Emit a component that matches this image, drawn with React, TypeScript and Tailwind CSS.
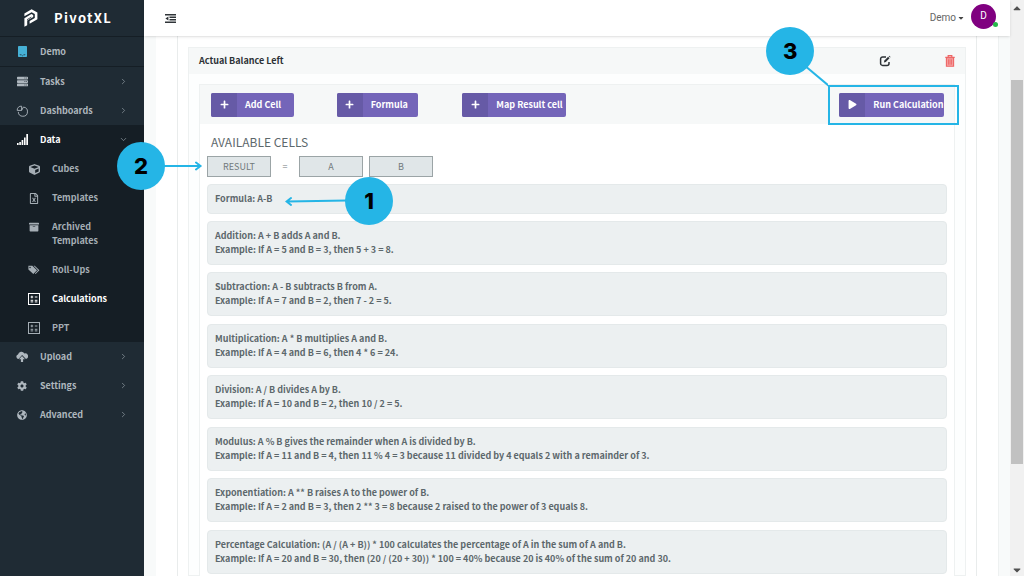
import React, { useState } from 'react';
import {
  FaServer, FaCube, FaRegFileExcel, FaArchive, FaCog, FaGlobeAmericas,
  FaPlus, FaPlay, FaCaretDown, FaCaretUp
} from 'react-icons/fa';
import { ChevronRight, ChevronDown } from 'lucide-react';

interface NavItem {
  label: string;
  icon: React.ReactNode;
}

const SignalIcon = () => (
  <svg viewBox="0 0 11 11" className="w-[11px] h-[11px]" fill="currentColor">
    <path d="M0 9h1.6v2H0zM2.3 8h1.6v3H2.3zM4.6 6h1.7v5H4.6zM7 3.4h1.6V11H7zM9.3 0H11v11H9.3z" />
  </svg>
);

const PieIcon = () => (
  <svg viewBox="0 0 12 12" className="w-3 h-3" fill="none" stroke="currentColor" strokeWidth="0.9">
    <path d="M7.4 2.1A4.6 4.6 0 1 1 2.3 6.9" />
    <path d="M5.6 5.4H1.2A3.9 3.9 0 0 1 5.6 1.2z" />
    <path d="M5.6 5.4l1.8-3.3" />
  </svg>
);

const CalcIcon = () => (
  <svg viewBox="0 0 12 12" className="w-3 h-3" fill="none" stroke="currentColor">
    <rect x="0.5" y="0.5" width="11" height="11" />
    <path d="M2.6 4h2.6M3.9 2.7v2.6M6.8 4h2.6M2.6 7.3h2.6M2.6 8.9h2.6M6.8 7.3h2.6M6.8 8.9h2.6" />
  </svg>
);

const TagsIcon = () => (
  <svg viewBox="0 0 12 10" className="w-3 h-[10px]" fill="currentColor">
    <path fillRule="evenodd" d="M0.4 0.8h3.9L9 5.3 5.3 9.1 0.4 4.5zM2 1.8a.7.7 0 1 0 .1 1.4A.7.7 0 0 0 2 1.8z" />
    <path d="M5.6 0.8h1.1l4.7 4.5-3.8 3.8-.7-.7 3.1-3.1z" />
  </svg>
);

const UploadIcon = () => (
  <svg viewBox="0 0 12 11" className="w-3 h-[11px]" fill="currentColor">
    <path d="M2.6 8A2.3 2.3 0 0 1 2 3.5 3.5 3.5 0 0 1 8.4 2.4 2.8 2.8 0 0 1 10 7.9L6.1 3.9z" />
    <path d="M6 5.1l3 3.1H7.1V11H4.9V8.2H3z" />
  </svg>
);

const BuildingIcon = () => (
  <svg viewBox="0 0 9 11" className="w-[9px] h-[11px]" fill="currentColor">
    <rect width="9" height="11" rx="0.8" />
    <path d="M2.2 8v.9h1.6M5.2 8.9h1.6V8M4 9.8h1" fill="none" stroke="#1f2b34" strokeWidth="0.6" />
  </svg>
);

const MenuIcon = () => (
  <svg viewBox="0 0 11 9" className="w-[11px] h-[9px]" fill="currentColor">
    <path d="M0 0h11v1.5H0zM4.5 2.5H11V4H4.5zM4.5 5H11v1.5H4.5zM0 7.5h11V9H0zM3.4 2.4v4.2L0.4 4.5z" />
  </svg>
);

const EditIcon = () => (
  <svg viewBox="0 0 12 12" className="w-3 h-3" fill="none" stroke="currentColor" strokeWidth="1.5">
    <path d="M7 2H3.6A2 2 0 0 0 1.6 4v4.4a2 2 0 0 0 2 2H8a2 2 0 0 0 2-2V7" />
    <path d="M4.9 7.4l.5-1.9 3.7-3.7 1.4 1.4-3.7 3.7z" fill="currentColor" stroke="none" />
    <path d="M9.7 1.3l.6-.6 1.3 1.3-.6.6z" fill="currentColor" stroke="none" />
  </svg>
);

const TrashIcon = () => (
  <svg viewBox="0 0 10 12" className="w-[10px] h-3" fill="none" stroke="#ee6464">
    <path d="M0.3 2.4h9.4M3.2 2.2V.7h3.6v1.5" strokeWidth="1.2" />
    <path d="M1.4 2.8v8.4h7.2V2.8z" fill="#f5a3a3" strokeWidth="1.1" />
    <path d="M3.4 4.3v5.4M5 4.3v5.4M6.6 4.3v5.4" strokeWidth="0.9" />
  </svg>
);

const Logo = () => (
  <svg viewBox="0 0 14 18" className="w-[14px] h-[18px]" fill="currentColor">
    <path d="M0.4 4.6L7.6 0.3L13.4 3.6V10.3L5.6 14.7V11.9L10.8 8.9V5.1L7.6 3.2L0.4 7.3z" />
    <path d="M0.4 9.2L7.4 5.1L9.2 6.1V8.1L3.2 11.6V16.2L0.4 17.8z" />
    <path d="M3 10.7L7.3 8.2" stroke="#1f2b34" strokeWidth="0.8" />
  </svg>
);

const dataItems: NavItem[] = [
  { label: 'Cubes', icon: <FaCube className="w-[11px] h-[11px]" /> },
  { label: 'Templates', icon: <FaRegFileExcel className="w-[10px] h-[11px]" /> },
  { label: 'Archived Templates', icon: <FaArchive className="w-[10px] h-[10px]" /> },
  { label: 'Roll-Ups', icon: <TagsIcon /> },
  { label: 'Calculations', icon: <CalcIcon /> },
  { label: 'PPT', icon: <CalcIcon /> },
];

const examples = [
  ['Addition: A + B adds A and B.', 'Example: If A = 5 and B = 3, then 5 + 3 = 8.'],
  ['Subtraction: A - B subtracts B from A.', 'Example: If A = 7 and B = 2, then 7 - 2 = 5.'],
  ['Multiplication: A * B multiplies A and B.', 'Example: If A = 4 and B = 6, then 4 * 6 = 24.'],
  ['Division: A / B divides A by B.', 'Example: If A = 10 and B = 2, then 10 / 2 = 5.'],
  ['Modulus: A % B gives the remainder when A is divided by B.', 'Example: If A = 11 and B = 4, then 11 % 4 = 3 because 11 divided by 4 equals 2 with a remainder of 3.'],
  ['Exponentiation: A ** B raises A to the power of B.', 'Example: If A = 2 and B = 3, then 2 ** 3 = 8 because 2 raised to the power of 3 equals 8.'],
  ['Percentage Calculation: (A / (A + B)) * 100 calculates the percentage of A in the sum of A and B.', 'Example: If A = 20 and B = 30, then (20 / (20 + 30)) * 100 = 40% because 20 is 40% of the sum of 20 and 30.'],
];

const NavRow = ({ label, icon, open = false }: NavItem & { open?: boolean }) => (
  <button
    className={`flex items-center w-full h-[29px] px-4 text-left ${open ? 'text-white' : 'text-[#aeb7be]'}`}
  >
    <span className="flex justify-center w-3 mr-3">{icon}</span>
    <span className="flex-1">{label}</span>
    {open ? (
      <ChevronDown className="w-[9px] h-[9px] text-[#8a949c]" />
    ) : (
      <ChevronRight className="w-[9px] h-[9px] text-[#8a949c]" />
    )}
  </button>
);

const ActionButton = ({ label, icon, className }: NavItem & { className: string }) => (
  <button
    className={`flex items-center h-6 rounded-xs overflow-hidden bg-[#7465b9] text-white font-bold whitespace-nowrap ${className}`}
  >
    <span className="flex items-center justify-center shrink-0 w-[26px] h-full bg-[#665aa6]">{icon}</span>
    <span className="pl-2">{label}</span>
  </button>
);

const Callout = ({ value, className }: { value: string; className: string }) => (
  <div
    className={`absolute z-20 flex items-center justify-center w-12 h-12 rounded-full bg-[#25b5e6] text-black font-[Inter,sans-serif] font-extrabold text-[22px] leading-6 ${className}`}
  >
    {value}
  </div>
);

const App = () => {
  const [active, setActive] = useState('Calculations');

  return (
    <div className="flex h-screen overflow-hidden bg-[#f8fafa] font-['Noto_Sans_CJK_SC','Noto_Sans',sans-serif] text-[9px] leading-[14px] text-[#5d686c]">
      <aside className="shrink-0 w-36 bg-[#1f2b34] font-bold">
        <div className="flex items-center h-9 pl-6 text-white">
          <Logo />
          <span className="ml-4 text-[13px] leading-5 tracking-widest">PivotXL</span>
        </div>
        <button className="flex items-center w-full h-[31px] pl-4 border-y border-[#151e25] text-left text-[#aeb7be]">
          <span className="flex justify-center w-3 mr-3 text-[#46b1d6]">
            <BuildingIcon />
          </span>
          Demo
        </button>
        <nav>
          <NavRow label="Tasks" icon={<FaServer className="w-[11px] h-[11px]" />} />
          <NavRow label="Dashboards" icon={<PieIcon />} />
          <div className="flex flex-col gap-px bg-[#151e25]">
            <NavRow label="Data" icon={<SignalIcon />} open />
            {dataItems.map((item) => (
              <button
                key={item.label}
                onClick={() => setActive(item.label)}
                className={`flex items-start w-full py-[7px] pl-7 pr-8 text-left ${
                  active === item.label ? 'text-white' : 'text-[#a5aeb5]'
                }`}
              >
                <span className="flex items-center justify-center w-3 h-[14px] mr-3">{item.icon}</span>
                <span className="flex-1">{item.label}</span>
              </button>
            ))}
          </div>
          <NavRow label="Upload" icon={<UploadIcon />} />
          <NavRow label="Settings" icon={<FaCog className="w-[10px] h-[10px]" />} />
          <NavRow label="Advanced" icon={<FaGlobeAmericas className="w-[10px] h-[10px]" />} />
        </nav>
      </aside>

      <div className="flex flex-col flex-1 min-w-0">
        <header className="relative z-10 flex items-center justify-between shrink-0 h-9 pl-[21px] pr-[14px] bg-white shadow-sm">
          <button aria-label="Toggle menu" className="text-[#2f3438]">
            <MenuIcon />
          </button>
          <div className="flex items-center gap-[6px] font-[Roboto,sans-serif] text-[#666]">
            <button className="flex items-center gap-px text-[10px]">
              Demo
              <FaCaretDown className="w-2 h-2 text-[#444]" />
            </button>
            <span className="relative flex items-center justify-center w-[25px] h-[25px] mb-1 rounded-full bg-[#800080] text-[10px] text-white">
              D
              <span className="absolute -right-0.5 bottom-0.5 w-[5px] h-[5px] rounded-full bg-[#27b84a]" />
            </span>
          </div>
        </header>

        <main className="flex-1 min-h-0 ml-3 mr-[11px] px-[21px] border-r border-[#eef1f1] bg-white">
          <section className="h-full px-[10px] pt-[11px] border-x border-[#e9ecec]">
            <div className="h-full border border-[#eef1f1] bg-[#fdfefe]">
              <div className="flex items-center h-[26px] px-[10px] bg-[#f6f8f8] text-[#2d3236]">
                <h2 className="flex-1 font-bold">Actual Balance Left</h2>
                <button aria-label="Edit" className="mr-[54px]">
                  <EditIcon />
                </button>
                <button aria-label="Delete">
                  <TrashIcon />
                </button>
              </div>

              <div className="mx-[10px] mt-[10px] border border-[#eef1f1] bg-white">
                <div className="grid grid-cols-6 items-center h-[39px] bg-[#f6f8f8]">
                  <div className="pl-[11px]">
                    <ActionButton label="Add Cell" icon={<FaPlus className="w-[9px] h-[9px]" />} className="w-[83px]" />
                  </div>
                  <div className="pl-[11px]">
                    <ActionButton label="Formula" icon={<FaPlus className="w-[9px] h-[9px]" />} className="w-[81px]" />
                  </div>
                  <div className="pl-[11px]">
                    <ActionButton label="Map Result cell" icon={<FaPlus className="w-[9px] h-[9px]" />} className="w-[104px]" />
                  </div>
                  <div className="relative col-start-6 pl-[11px]">
                    <ActionButton label="Run Calculation" icon={<FaPlay className="w-[9px] h-[9px]" />} className="w-[105px]" />
                    <div className="absolute left-0 -top-2 w-[131px] h-10 border-2 border-[#25b5e6]" />
                    <svg className="absolute -left-6 -top-7 w-6 h-6" viewBox="0 0 24 24" fill="none" stroke="#25b5e6" strokeWidth="2">
                      <path d="M0 0L25 21" />
                    </svg>
                    <Callout value="3" className="-left-[62px] -top-[66px]" />
                  </div>
                </div>

                <div className="px-[7px] pt-[10px]">
                  <h3 className="pl-1 text-[12px] leading-4">AVAILABLE CELLS</h3>
                  <div className="relative flex items-center mt-[6px] text-[#71797c]">
                    <button className="w-16 h-[21px] border border-[#9ba4a6] bg-[#e0e6e8]">RESULT</button>
                    <span className="w-7 text-center">=</span>
                    <button className="w-16 h-[21px] mr-[6px] border border-[#9ba4a6] bg-[#e0e6e8]">A</button>
                    <button className="w-16 h-[21px] border border-[#9ba4a6] bg-[#e0e6e8]">B</button>
                    <svg className="absolute -left-[44px] top-1 w-10 h-3" viewBox="0 0 40 12" fill="none" stroke="#25b5e6" strokeWidth="2" strokeLinecap="round">
                      <path d="M0 6H37M33 2.5L37.5 6L33 9.5" />
                    </svg>
                    <Callout value="2" className="-left-[90px] -top-[14px]" />
                  </div>

                  <div className="relative my-[7px] p-[7px] border border-[#e4e9ea] rounded-sm bg-[#ecf0f1] font-bold">
                    Formula: A-B
                    <svg className="absolute left-[77px] top-[10px] w-[62px] h-3" viewBox="0 0 62 12" fill="none" stroke="#25b5e6" strokeWidth="2" strokeLinecap="round">
                      <path d="M62 5.5L2 6.5M6 3L1.5 6.5L6 10" />
                    </svg>
                    <Callout value="1" className="left-[137px] -top-2" />
                  </div>

                  {examples.map(([title, example]) => (
                    <div
                      key={title}
                      className="odd:mb-2 even:mb-[7px] p-[7px] border border-[#e4e9ea] rounded-sm bg-[#ecf0f1] font-bold"
                    >
                      <p>{title}</p>
                      <p>{example}</p>
                    </div>
                  ))}
                </div>
              </div>
            </div>
          </section>
        </main>
      </div>

      {/* scroll track */}
      <div className="flex flex-col items-center shrink-0 w-[14px] bg-[#f1f1f1] text-[#505050]">
        <FaCaretUp className="w-2 h-3 my-0.5" />
        <div className="w-3 mt-16 h-2/3 bg-[#c1c1c1]" />
        <FaCaretDown className="w-2 h-3 mt-auto" />
      </div>
    </div>
  );
};

export default App;
